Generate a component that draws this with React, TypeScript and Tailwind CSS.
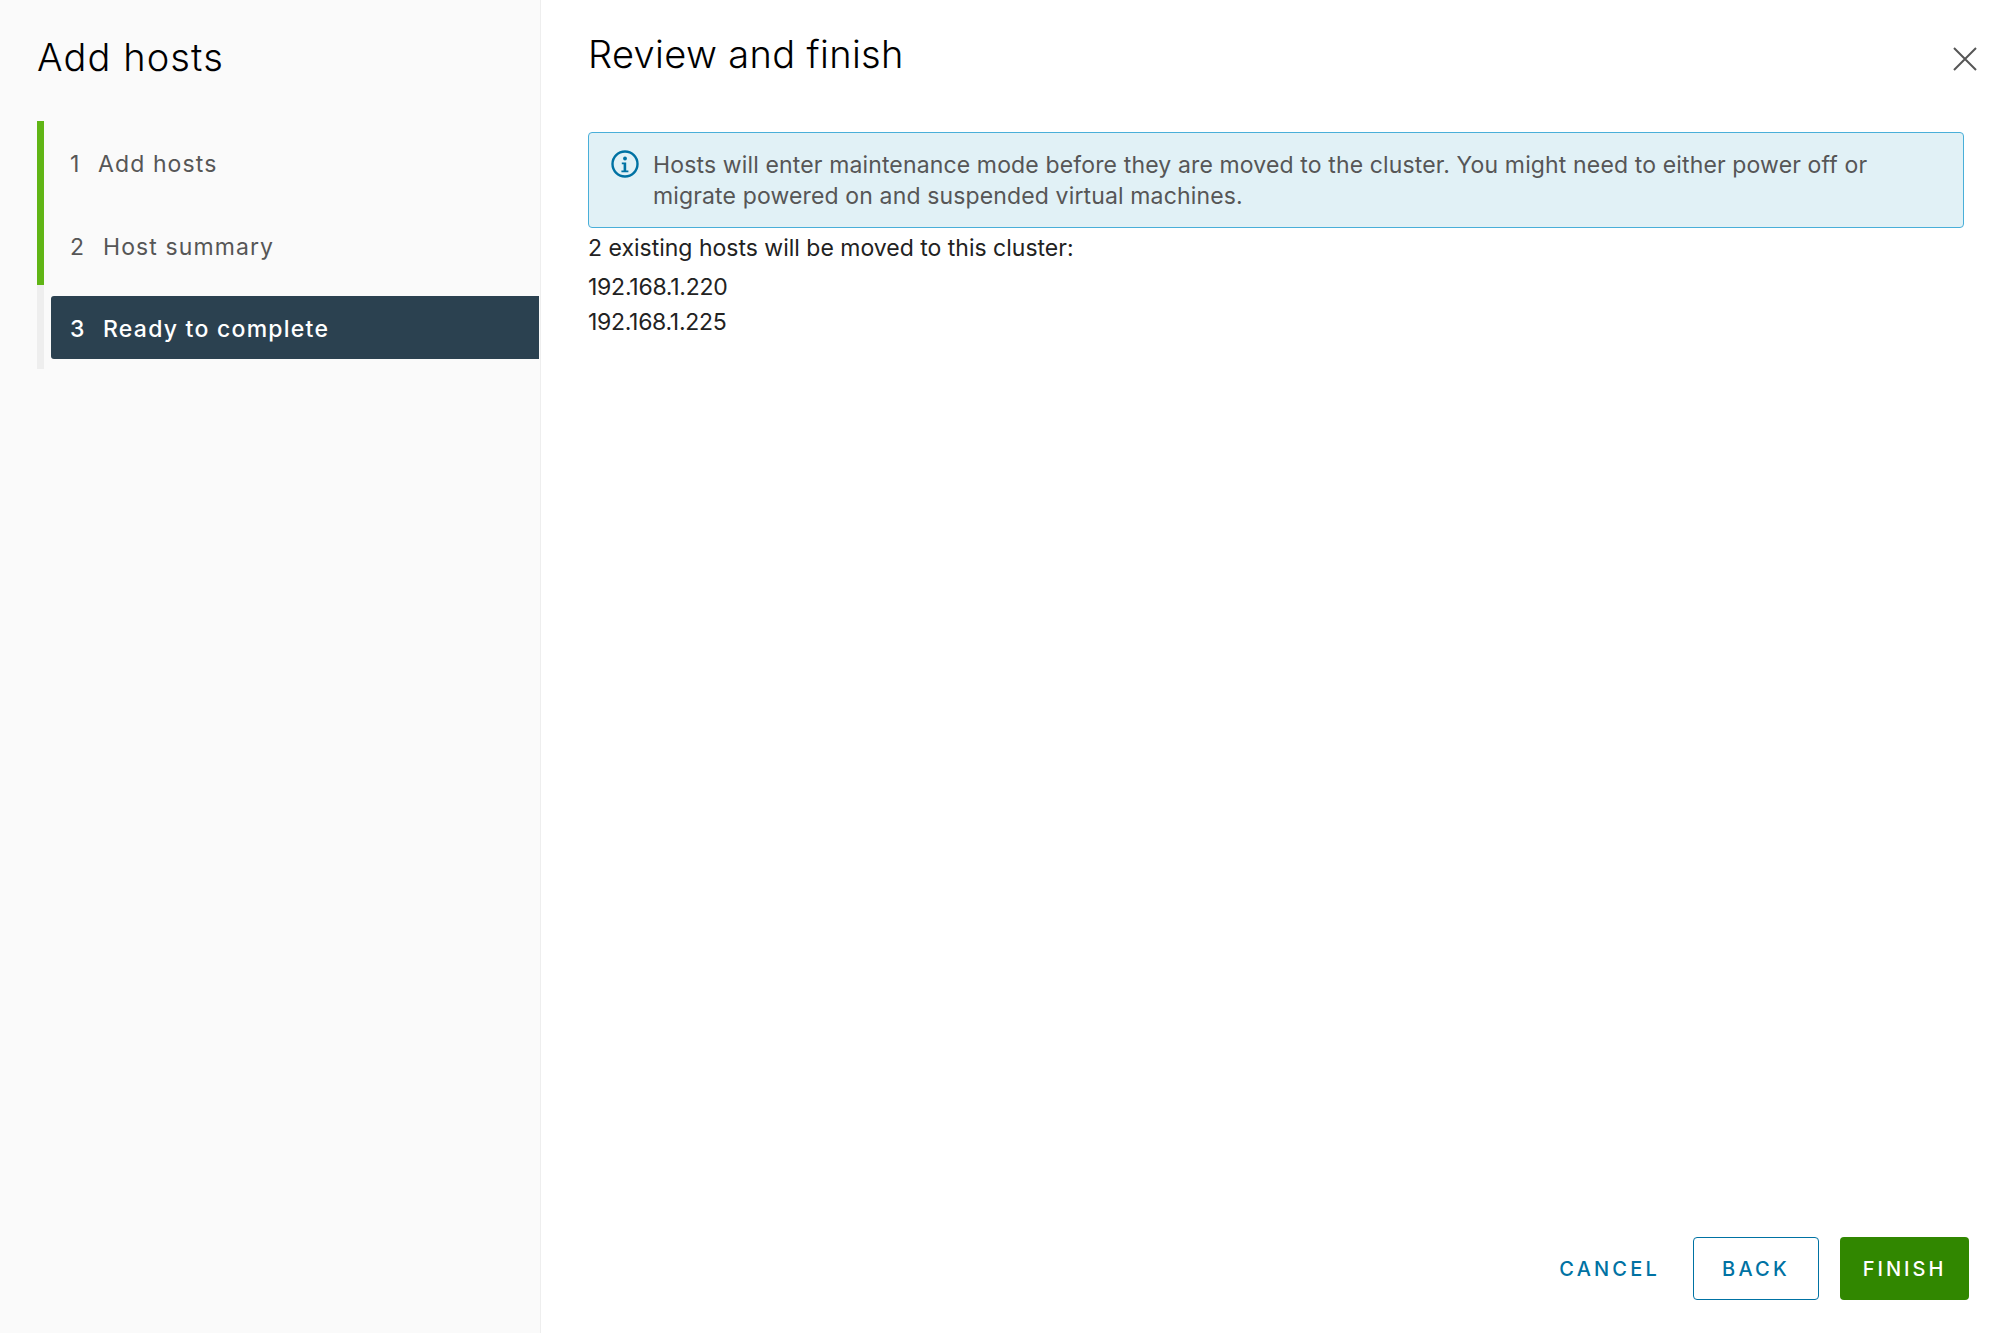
const font = "font-['Inter','Liberation_Sans',sans-serif]";

function Step({ n, label, active }: { n: number; label: string; active?: boolean }) {
  return (
    <div
      className={`flex h-[63px] items-center rounded-l-[3px] pl-[19px] text-[23px] ${n === 1 ? "pt-[2px]" : "pt-[4px]"} ${
        active ? "bg-[#2b4150] font-medium tracking-[1.25px] text-white" : "tracking-[1.1px] text-[#565656]"
      }`}
    >
      <span className={n === 1 ? "w-[28px]" : "w-[33px]"}>{n}</span>
      <span>{label}</span>
    </div>
  );
}

export default function App() {
  return (
    <div className={`flex h-[1333px] w-[2003px] bg-white ${font}`}>
      <aside className="h-full w-[541px] shrink-0 border-r border-[#eeeeee] bg-[#fafafa] pl-[37px] pr-px pt-[33px]">
        <h2 className="text-[38px] leading-[48px] font-light tracking-[1.1px] text-black">Add hosts</h2>
        <div className="mt-[40px] flex">
          <div className="flex h-[248px] w-[7px] flex-col bg-[#eeeeee]">
            <div className="h-[164px] bg-[#60b515]" />
          </div>
          <nav className="flex-1 pl-[7px] pt-[11px]">
            <Step n={1} label="Add hosts" />
            <div className="mt-[19px]">
              <Step n={2} label="Host summary" />
            </div>
            <div className="mt-[19px]">
              <Step n={3} label="Ready to complete" active />
            </div>
          </nav>
        </div>
      </aside>
      <main className="flex min-w-0 flex-1 flex-col pb-[33px] pl-[47px] pr-[33px] pt-[30px]">
        <div className="flex items-start justify-between">
          <h1 className="text-[38px] leading-[48px] font-light tracking-[0.35px] text-black">Review and finish</h1>
          <button className="-mr-[7px] mt-[17px] text-[#565656]">
            <svg width="24" height="24" viewBox="0 0 24 24" fill="none" stroke="currentColor" strokeWidth="2">
              <path d="M1 1 23 23M23 1 1 23" />
            </svg>
          </button>
        </div>
        <div className="mr-[6px] mt-[54px] flex h-[96px] rounded-[4px] border border-[#49afd9] bg-[#e1f1f6] pl-[22px] pr-[40px] pt-[17px] text-[23px] leading-[31px] tracking-[0.14px] text-[#565656]">
          <svg width="28" height="28" viewBox="0 0 28 28" fill="none" className="mr-[14px] shrink-0 text-[#0072a3]">
            <circle cx="14" cy="14" r="12.5" stroke="currentColor" strokeWidth="2.4" />
            <circle cx="14" cy="8.5" r="1.9" fill="currentColor" />
            <path d="M10.8 12.4h4.4v8h2.2v1.9h-7v-1.9h2.2v-6.1h-1.8z" fill="currentColor" />
          </svg>
          <p>
            Hosts will enter maintenance mode before they are moved to the cluster. You might need to either power off or migrate powered on and suspended virtual machines.
          </p>
        </div>
        <p className="mt-[5px] text-[23px] leading-[31px] text-[#222222]">2 existing hosts will be moved to this cluster:</p>
        <p className="mt-[8px] text-[23px] leading-[31px] tracking-[-0.25px] text-[#222222]">192.168.1.220</p>
        <p className="mt-[4px] text-[23px] leading-[31px] tracking-[-0.3px] text-[#222222]">192.168.1.225</p>
        <div className="mr-px mt-auto flex items-center justify-end gap-[21px]">
          <button className="h-[63px] px-[12px] text-[20px] font-medium tracking-[3.2px] text-[#0072a3]">CANCEL</button>
          <button className="h-[63px] w-[126px] rounded-[4px] border border-[#0072a3] text-[20px] font-medium tracking-[3.2px] text-[#0072a3]">BACK</button>
          <button className="h-[63px] w-[129px] rounded-[4px] bg-[#318700] text-[20px] font-medium tracking-[3px] text-white">FINISH</button>
        </div>
      </main>
    </div>
  );
}
